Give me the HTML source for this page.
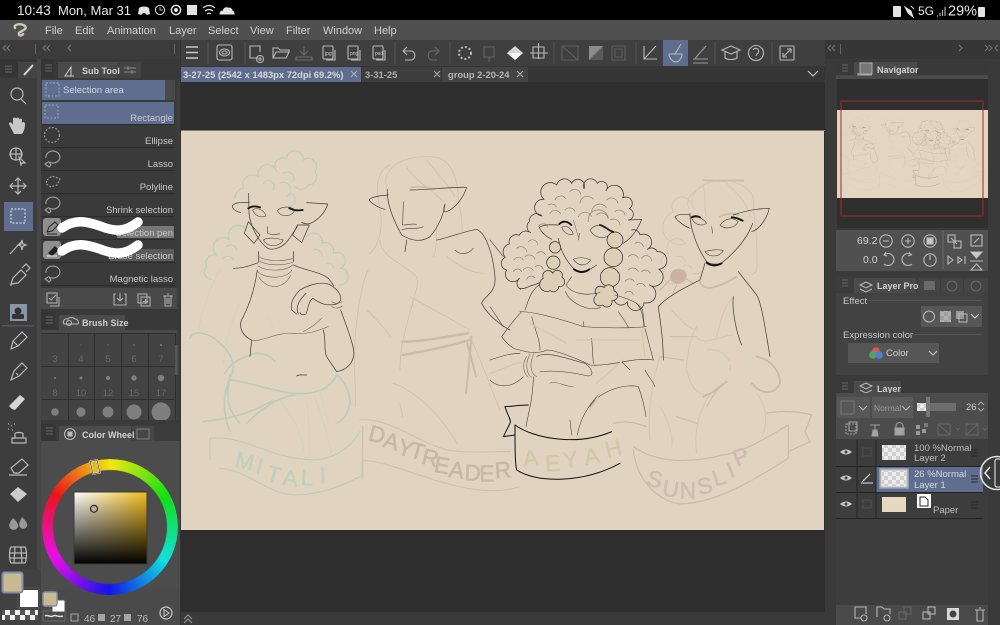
<!DOCTYPE html>
<html><head><meta charset="utf-8"><style>
html,body{margin:0;padding:0;background:#2e2e2e;width:1000px;height:625px;overflow:hidden}
svg{position:absolute;left:0;top:0;font-family:"Liberation Sans",sans-serif}
.t{fill:#c6c6c6;font-size:10px}
.m{fill:#cfcfcf;font-size:11px}
.b{font-weight:bold}
.i{fill:none;stroke:#b9b9b9;stroke-width:1.1}
.l{fill:none;stroke:#403b33;stroke-width:2.1;stroke-linecap:round;stroke-linejoin:round}
.n{fill:none;stroke:#403b33;stroke-width:1.7;stroke-linecap:round;stroke-linejoin:round}
.g{fill:none;stroke:#6a6458;stroke-width:1.7;stroke-linecap:round}
.k{fill:none;stroke:#111;stroke-width:5.5;stroke-linecap:round}
.w{stroke-width:1.6;stroke-linejoin:round}
#wheel{position:absolute;left:42px;top:459px;width:136px;height:136px;border-radius:50%;background:conic-gradient(from 301deg,#e8141c,#f0e810,#12e012,#10e0e0,#1414e8,#e810e8,#e8141c);-webkit-mask:radial-gradient(circle,transparent 56.5px,#000 57.5px);mask:radial-gradient(circle,transparent 56.5px,#000 57.5px)}
#sq{position:absolute;left:74px;top:492px;width:73px;height:72px;background:linear-gradient(to bottom,transparent,#000),linear-gradient(to right,#fff,#f2be1c)}
</style></head><body>
<svg width="1000" height="625" viewBox="0 0 1000 625">
<defs>
<pattern id="ck" width="8" height="8" patternUnits="userSpaceOnUse"><rect width="8" height="8" fill="#ececec"/><rect width="4" height="4" fill="#cfcfcf"/><rect x="4" y="4" width="4" height="4" fill="#cfcfcf"/></pattern>
<pattern id="ck2" width="10" height="10" patternUnits="userSpaceOnUse"><rect width="10" height="10" fill="#f0f0f0"/><rect width="5" height="5" fill="#555"/><rect x="5" y="5" width="5" height="5" fill="#555"/></pattern>
<g id="art">
 <!-- Figure 1 sketches -->
 <g transform="translate(180 130) scale(.3333)" fill="none" stroke-linecap="round">
  <g stroke="#bccdb7" stroke-width="3.2">
   <path d="M285 110a25 25 0 0 1 35-25a25 25 0 0 1 50 5a25 25 0 0 1 35 35a25 25 0 0 1-20 40a25 25 0 0 1-40 5M290 125a25 25 0 0 0-55 15a30 30 0 0 0-45 35a30 30 0 0 0-25 30M310 130a20 20 0 0 1 30 25M250 160a18 18 0 0 1 30 20M300 160a20 20 0 0 1 20 40M330 190a18 18 0 0 1-10 40"/>
   <path d="M200 300a26 26 0 0 0-50 30a28 28 0 0 0-40 45a26 26 0 0 0-30 35a22 22 0 0 0 15 38M140 350a18 18 0 0 1 30 10M130 385a18 18 0 0 1 30 5"/>
   <path d="M380 320a25 25 0 0 1 45 20a25 25 0 0 1 35 30a25 25 0 0 1 22 45a20 20 0 0 1-5 50M400 360a18 18 0 0 1 25 20M440 400a15 15 0 0 1 20 15"/>
   <path stroke-width="5" d="M30 625C40 600 85 605 120 640C150 665 168 700 155 735C135 770 120 830 150 905M135 730C150 700 185 680 230 670C255 670 275 680 285 695M150 750C200 755 290 785 340 790C400 795 450 780 470 735C490 750 510 780 510 820C505 850 490 870 470 880M150 735C140 790 135 830 180 880M200 880C250 830 300 800 345 795M70 875C110 870 200 860 280 810"/>
   <path stroke-width="3.5" d="M90 925C200 915 260 985 400 990C450 990 510 960 540 905M120 1015C200 1020 260 1090 340 1095C420 1095 480 1070 540 1040M90 925L90 990M548 890L546 1050"/>
  </g>
  <g stroke="#cfd3bc" stroke-width="2.2">
   <path d="M120 420C90 470 70 530 55 600M180 520C150 580 140 620 130 700M265 560L280 600M400 790C420 850 440 900 455 970M380 820C390 870 385 930 390 970M290 800C340 860 365 910 372 965M420 780L445 880"/>
  </g>
  <!-- Figure 2 sketches -->
  <g stroke="#d0c1ad" stroke-width="2.6">
   <path d="M622 178C600 120 660 70 770 82C815 92 835 150 835 210C840 250 850 270 845 310M630 105C590 120 585 170 600 240C610 290 600 340 570 372M680 110C700 150 760 180 790 215M740 90C770 130 810 170 825 200M600 330C600 380 670 400 710 440C720 480 690 510 700 530M770 280C770 320 770 360 760 380"/>
   <path d="M565 420C540 470 530 560 525 640C520 720 530 800 525 830M560 540C590 570 620 600 630 620M690 500C760 540 820 570 870 600M700 510C680 590 660 640 660 720M640 760C700 780 780 850 830 940M800 380C840 410 880 430 910 430M870 620C900 680 930 770 960 840M660 820L668 860"/>
   <path stroke-width="3.5" d="M540 870C620 860 700 930 800 960C860 970 930 965 990 965M550 990C650 1000 780 1070 900 1080C950 1085 990 1080 1020 1070M548 890L548 1040"/>
  </g>
  <g stroke="#c9bba8">
   <path stroke-width="7" d="M665 635C730 635 800 620 865 610M668 675C730 665 800 650 870 630"/>
   <path stroke-width="6" d="M875 620L858 790M862 640L888 740"/>
   <path stroke-width="5" d="M695 172C720 168 745 172 765 178"/>
  </g>
  <!-- Figure 1 lines -->
  <path class="l" d="M208 218C185 216 165 218 158 226C155 238 168 244 182 248M380 218L443 222C438 245 415 270 392 280C380 284 372 280 365 277M206 190L207 250C212 295 240 340 265 356C285 362 310 350 325 330L352 290"/>
  <path class="k" d="M205 235C215 228 228 228 240 232M328 235C340 240 350 243 368 240"/>
  <path class="n" d="M218 240C232 230 252 240 258 258C245 264 226 260 218 240ZM292 242C305 228 330 228 345 240C335 260 305 265 292 242ZM265 310C280 320 290 310 300 312M250 330C265 320 295 325 310 330C300 350 265 355 250 330ZM262 290L262 310"/>
  <path class="l" d="M205 275L193 310L222 340L240 315ZM352 285L338 315L365 338L388 285ZM160 415C190 415 215 405 235 398M340 405C370 420 420 425 445 445L462 468M232 420C225 470 210 520 190 560C170 590 190 620 215 630M215 630L210 680M430 600C440 640 430 660 440 680L470 725M350 738C360 732 370 736 380 735M482 540C500 590 520 640 522 670C520 700 500 720 470 725M236 365L236 395M340 365L340 395"/>
  <path class="l" d="M360 480C385 465 420 455 445 462C480 480 495 510 470 522C440 530 420 520 398 505C385 515 385 535 378 552C372 556 362 555 360 548M360 480C340 500 330 520 335 540L350 552M378 490C358 510 345 530 355 552"/>
  <path class="g" d="M235 380C260 395 310 395 340 385M236 392C260 408 310 408 340 396M234 408C260 425 315 425 338 405M234 425C255 448 320 448 336 420M236 440C260 480 310 480 332 436M215 630C240 640 290 605 340 610C385 615 420 600 445 590M370 605C390 595 410 580 425 565M455 515C465 522 475 522 487 515M455 530C465 537 478 535 487 528"/>
  <!-- Figure 2 lines -->
  <path class="l" d="M625 195C600 197 575 200 567 210C575 222 600 235 615 238M690 180C740 180 820 170 860 172C850 205 825 235 800 245C790 248 790 235 795 222M622 178C620 220 640 270 665 315C690 330 720 340 750 320C775 290 790 260 795 222M680 330L675 365M770 330C800 325 850 305 890 298C920 310 940 380 945 440C950 490 910 500 905 520C925 560 970 590 990 600"/>
  <path class="n" d="M670 215L668 285C680 285 695 280 710 283M665 300C690 290 715 300 730 290M825 360C835 372 860 378 880 355"/>
 </g>
 <!-- Figures 3 and 4 -->
 <g transform="translate(490 130) scale(.3333)" fill="none" stroke-linecap="round">
  <!-- Figure 4 sketch -->
  <g stroke="#d5c2b3" stroke-width="2.6">
   <path d="M610 235C590 190 640 150 700 150C760 155 800 190 790 230C795 280 805 350 800 420C790 440 770 440 750 420M640 170C610 180 580 210 600 240M640 165C650 210 640 240 650 260M700 150C730 180 770 210 780 260"/>
   <path d="M600 215a28 28 0 0 0-50 30a25 25 0 0 0 40 95M585 340a28 28 0 0 0-50 30a28 28 0 0 0-10 50a26 26 0 0 0 30 40M610 430a25 25 0 0 0 30-10M560 380a18 18 0 0 1 25 15M580 410a15 15 0 0 1 25 5"/>
   <path d="M620 590C600 620 590 680 590 720C605 790 640 800 660 790M620 620C640 650 680 620 730 615M650 660C700 650 730 700 720 720M510 680C490 740 470 850 480 930M545 540C580 580 590 590 620 600M620 970C610 900 630 800 700 760M800 790C830 830 835 880 815 920M730 500C700 530 690 580 680 620M510 830C540 880 550 930 545 950"/>
  </g>
  <g stroke="#cdb9a9">
   <path stroke-width="3.5" d="M430 950C500 1000 600 1000 700 975C780 960 850 910 895 885M430 960C440 1050 500 1110 570 1122C680 1120 790 1050 895 985M895 885L895 985M830 850C880 840 930 845 965 855L945 905L960 935L895 965M370 880C410 870 440 880 470 890"/>
   <path stroke-width="5.5" d="M640 150C680 155 720 150 760 152M630 455C640 490 690 470 740 440M800 680C850 690 870 730 870 760C850 800 810 790 785 760M690 260C710 250 730 250 745 255M640 800C670 790 690 770 710 755"/>
   <path stroke-width="3" d="M540 620L620 620M510 680L580 690M560 860L620 880M650 830C660 810 680 780 700 760"/>
  </g>
  <path stroke="#e8cfc0" stroke-width="8" d="M725 660L735 720M748 665L750 725M715 700L760 695"/>
  <path fill="#cbb2a2" stroke="#cbb2a2" stroke-width="3" d="M565 418c15 0 25 10 23 22c-2 14-15 22-28 20c-12-2-20-12-18-22c2-12 12-20 23-20zM540 450L510 480M560 465L545 500M585 445L610 460"/>
  <!-- Figure 3 body -->
  <path class="n" d="M105 540C115 510 125 475 155 460M90 545C140 545 220 570 280 590C340 595 420 595 470 590M385 545C395 560 410 580 415 592M440 520C455 535 460 560 462 590M95 545C70 570 50 600 35 620C50 640 70 660 90 660C120 670 150 670 170 660C200 660 270 690 300 705C370 710 430 680 490 690L465 595M125 560C135 600 150 630 150 660M0 690C30 680 60 670 90 670M0 750C20 770 60 780 100 740M140 680C170 660 240 690 285 700C305 715 315 735 295 738C260 730 200 720 150 725M130 740C130 800 115 850 108 890M395 695L420 720M465 720C475 740 490 755 495 770M300 830C330 780 410 760 445 770C460 810 465 840 468 860M305 625L310 700M280 575L282 590M0 330L40 380M0 530L40 590M240 870L245 915M262 915C270 870 290 830 330 790"/>
  <path class="g" d="M110 680C95 700 100 730 115 742M120 672C105 700 108 730 125 742M132 670C118 700 120 730 140 740M180 760C200 750 220 770 250 770"/>
  <path fill="none" stroke="#d0c9a8" stroke-width="3.5" d="M0 730C40 720 80 690 110 700M320 760L400 690M330 790L300 840M455 600L465 680M120 580L230 640M260 630L450 630"/>
  <path fill="none" stroke="#111" stroke-width="3" d="M75 885C75 950 75 1000 80 1020C140 1060 280 1060 390 1000M75 885C130 925 260 950 365 905M115 825C90 825 60 830 45 830C50 850 65 870 60 880L40 920L75 915"/>
  <!-- Figure 4 lines -->
  <path class="l" d="M600 255C575 250 558 255 555 262C565 275 585 290 600 295M730 255C770 240 815 235 838 235C830 270 805 300 785 305M600 250C600 300 625 360 650 395C665 405 690 405 700 395C730 370 770 330 788 280M645 400L630 450M745 425L800 495C815 520 825 590 840 680M630 450C590 470 530 500 505 530C510 570 520 620 520 690M730 500C725 540 740 610 755 645"/>
  <path class="k" d="M650 398C665 410 680 408 695 400M725 262C735 262 750 268 758 272M605 262C612 258 622 258 630 262"/>
  <path class="n" d="M605 265C620 255 640 265 650 280C635 290 615 285 605 265ZM690 285C705 265 730 260 745 275C735 295 705 300 690 285ZM645 365C665 358 690 358 700 362C690 380 660 385 645 365ZM665 290L668 310"/>
 </g>
 <!-- Figure 3 head and hair -->
 <g transform="translate(500 170) scale(.3333)" fill="none" stroke-linecap="round" stroke-linejoin="round">
  <path stroke="#332e28" stroke-width="2.1" d="M62 358A20 20 0 0 1 58 325A22 22 0 0 1 20 300A20 20 0 0 1 16 262A24 24 0 0 1 28 222A22 22 0 0 1 58 196A22 22 0 0 1 92 188A20 20 0 0 1 88 155A22 22 0 0 1 126 138A24 24 0 0 1 132 88A26 26 0 0 1 170 45A24 24 0 0 1 215 40A20 20 0 0 1 252 56A16 16 0 0 1 292 40A14 14 0 0 1 318 62A24 24 0 0 1 368 84A18 18 0 0 1 388 116A18 18 0 0 1 388 150"/>
  <path stroke="#332e28" stroke-width="2.1" d="M395 180A20 20 0 0 1 420 195A20 20 0 0 1 442 238A20 20 0 0 1 472 245A24 24 0 0 1 476 298A24 24 0 0 1 448 345A24 24 0 0 1 432 398A24 24 0 0 1 382 395A20 20 0 0 1 345 372M60 355C75 360 90 345 102 345C115 340 130 335 135 320"/>
  <g stroke="#7d766a" stroke-width="1.8">
   <path d="M50 235a18 18 0 0 1 30 10M85 215a16 16 0 0 1 28 8M42 270a16 16 0 0 1 28 0M75 260a18 18 0 0 1 30 8M110 250a16 16 0 0 1 26 4M40 305a14 14 0 0 1 25 0M70 300a18 18 0 0 1 30 2M105 290a16 16 0 0 1 25 8M80 330a14 14 0 0 1 25-6M115 170a16 16 0 0 1 28 0M150 130a18 18 0 0 1 32 2M165 90a18 18 0 0 1 32-4M210 65a18 18 0 0 1 32 8M145 105a16 16 0 0 1 24 6M240 100a22 22 0 0 1 40-12M275 125a24 24 0 0 1 44-12M320 90a20 20 0 0 1 34 10M345 125a18 18 0 0 1 30 10M235 140a22 22 0 0 1 40 0M290 135a20 20 0 0 1 34 10M265 155a24 24 0 0 1 60-10M330 150a20 20 0 0 1 30 15M195 120a18 18 0 0 1 30 4M220 150L235 200M405 220a16 16 0 0 1 25 10M385 260a18 18 0 0 1 30 5M425 265a16 16 0 0 1 30 8M385 300a18 18 0 0 1 30 5M425 305a16 16 0 0 1 26 5M375 335a16 16 0 0 1 28 0M410 345a16 16 0 0 1 26 5M375 370a14 14 0 0 1 25 4"/>
  </g>
  <g fill="#dbd0b7" stroke="#2e2a24" stroke-width="2.1">
   <circle cx="165" cy="232" r="17"/><circle cx="160" cy="278" r="20"/>
   <path d="M130 325a15 15 0 0 1 28-15a14 14 0 0 1 28 12a15 15 0 0 1-10 28a16 16 0 0 1-26 12a16 16 0 0 1-20-37z"/>
   <circle cx="345" cy="210" r="24"/><circle cx="340" cy="262" r="28"/><circle cx="330" cy="322" r="29"/>
   <path d="M290 375a14 14 0 0 1 22-22a16 16 0 0 1 30 10a14 14 0 0 1-6 28a16 16 0 0 1-28 14a16 16 0 0 1-18-30z"/>
  </g>
  <path class="l" d="M175 165C150 163 128 165 118 172C124 188 140 200 155 208M385 150L425 148C415 175 395 205 370 220M175 205C182 245 200 275 225 300C245 310 270 300 290 285"/>
  <path class="k" d="M178 162C190 150 205 155 214 165M300 165C318 170 325 182 340 186M222 298C240 310 255 308 268 298"/>
  <path class="n" d="M185 172C200 162 215 178 220 192C208 198 192 190 185 172ZM270 180C285 160 315 162 335 186C320 210 285 208 270 180ZM220 268C238 260 258 264 272 270C258 290 235 290 220 268ZM238 190L236 210"/>
  <path class="n" d="M215 320L198 345C215 372 260 378 300 368M196 365C215 405 270 425 302 412M345 375C380 385 415 395 428 420L433 468"/>
 </g>
</g>
</defs>

<!-- base -->
<rect width="1000" height="625" fill="#2e2e2e"/>
<rect width="1000" height="20" fill="#000"/>
<rect y="20" width="1000" height="20" fill="#505050"/>
<rect y="40" width="1000" height="26" fill="#3f3f3f"/>
<rect x="180" y="66" width="650" height="16" fill="#363636"/>

<!-- status bar -->
<text x="17" y="15" style="font-size:13.5px" fill="#e8e8e8">10:43</text>
<text x="58" y="15" style="font-size:13px" fill="#e8e8e8">Mon, Mar 31</text>
<g fill="#e4e4e4" stroke="#e4e4e4">
 <path d="M139 8c2-2 8-2 10 0l1 6-3 1-2-2h-2l-2 2-3-1z" stroke="none"/>
 <circle cx="160" cy="10" r="4.6" fill="none" stroke-width="1"/><path d="M160 7v3h3" fill="none" stroke-width=".8"/>
 <circle cx="176" cy="10" r="4.6" fill="none" stroke-width="1.5"/><circle cx="176" cy="10" r="1.5"/>
 <rect x="187" y="5" width="10" height="10" stroke="none"/>
 <path d="M203 8q6-5 12 0M205 11q4-3 8 0M207 14q2-1.500 4 0" fill="none" stroke-width="1.1"/>
 <path d="M220 14q0-3 3-3q1-4 5-3q4 0 4 3q2 0 2 3z"/>
 <rect x="893" y="6" width="8" height="11" rx="1" stroke="none"/>
 <path d="M905 7l6 4 2 6-5-4zM911 6l3 3" stroke-width="1"/>
 <path d="M937 16h1M940 16v-3M942.500 16v-6M945 16v-9" fill="none" stroke="#aaa" stroke-width="1.2"/>
 <rect x="978" y="7" width="7" height="10" rx="1" stroke="none"/>
</g>
<text x="918" y="15" style="font-size:12px" fill="#e8e8e8">5G</text>
<text x="948" y="15.500" style="font-size:14.500px" fill="#e8e8e8">29%</text>

<!-- menu -->
<path d="M15 28C13 24 21 23 25 26C28 30 20 31 19 33C18 36 22 36 23 34" fill="none" stroke="#cfc7b5" stroke-width="2.4" stroke-linecap="round"/>
<text x="45" y="34" class="m">File</text><text x="75" y="34" class="m">Edit</text><text x="107" y="34" class="m">Animation</text><text x="169" y="34" class="m">Layer</text><text x="208" y="34" class="m">Select</text><text x="250" y="34" class="m">View</text><text x="286" y="34" class="m">Filter</text><text x="323" y="34" class="m">Window</text><text x="374" y="34" class="m">Help</text>

<!-- top toolbar -->
<rect x="663" y="40" width="25" height="26" fill="#5f6d8e"/>
<g fill="none" stroke="#565656"><path d="M208 42v22M245 42v22M395 42v22M450 42v22M554 42v22M636 42v22M715 42v22M772 42v22"/></g>
<path d="M186 47h12M186 52.500h12M186 58h12" stroke="#c8c8c8" stroke-width="1.600"/>
<g class="i">
 <rect x="217" y="45" width="15" height="15" rx="2"/><ellipse cx="224.500" cy="52.500" rx="5" ry="3.500"/><ellipse cx="224.500" cy="52.500" rx="2.500" ry="1.500"/>
 <path d="M258 58h-8V46h10v6"/><circle cx="260" cy="59" r="3.500"/><path d="M258 59h4M260 57v4"/>
 <path d="M273 58V48h5l2 2h9v3M273 58l3-6h13l-3 6z"/>
 <path style="stroke:#6e6e6e" d="M296 57h16v3h-16zM304 46v9M300 51l4 4 4-4"/>
 <rect x="323" y="46" width="10" height="13" rx="1"/><path d="M326 60h9v-10"/>
 <rect x="348" y="46" width="10" height="13" rx="1"/><path d="M351 60h9v-10"/>
 <rect x="373" y="46" width="10" height="13" rx="1"/><path d="M376 60h9v-10"/>
 <path d="M404 51h8a5 5 0 0 1 0 9h-7M407 47l-4 4 4 4"/>
 <path style="stroke:#6a6a6a" d="M438 51h-7a5 5 0 0 0 0 9h6M435 47l4 4-4 4"/>
 <circle cx="465" cy="53" r="6" stroke-dasharray="2 2" style="stroke-width:2"/>
 <path style="stroke:#666" d="M484 47h10v10h-10zM489 57v5"/>
 <path d="M533 47h11v11h-11zM538.500 43v16M530 53h18"/>
 <path style="stroke:#5e5e5e" d="M562 46h16v14h-16zM562 46l16 14"/>
 <path style="stroke:#5e5e5e" d="M612 46h13v14h-13zM615 49h7v8h-7z"/>
 <path d="M644 46v13h13M644 59l12-13"/>
 <path d="M669 54h13c0 4-3 8-6 8c-3 0-7-4-7-8M675 54l6-10" />
 <path style="stroke:#9a9a9a" d="M693 59h15M695 59l3-4 8-9M693 63h15"/>
 <path d="M722 50l9-4 9 4-9 4zM725 52v6c3 2 9 2 12 0v-6"/>
 <circle cx="756" cy="53" r="7.500"/><path d="M753 50a3 3 0 1 1 4 4l-1 2M756 58v.5"/>
 <rect x="780" y="46" width="14" height="14" rx="1"/><path d="M783 57l8-8M783 53v4h4M787 49h4v4"/>
</g>
<path d="M507 53l8-7 8 7-8 7z" fill="#d5d5d5"/><path d="M507 53h16l-8 7z" fill="#f5f5f5"/>
<path d="M589 46h14v14h-14z" fill="#8b8b8b"/><path d="M589 60l14-14v14z" fill="#5a5a5a"/>
<text x="325" y="55" style="font-size:5px" fill="#cfcfcf">jpg</text><text x="350" y="55" style="font-size:5px" fill="#cfcfcf">png</text><text x="375" y="55" style="font-size:5px" fill="#cfcfcf">psd</text>

<!-- tabs -->
<rect x="181" y="67" width="180" height="15" fill="#5f6d8e"/>
<rect x="362" y="67" width="79" height="15" fill="#3e3e3e"/>
<rect x="442" y="67" width="86" height="15" fill="#444"/>
<text x="183" y="78" class="b" style="font-size:9.400px" fill="#d9d9d9">3-27-25 (2542 x 1483px 72dpi 69.2%)</text>
<text x="365" y="78" class="b" style="font-size:9.400px" fill="#aaa">3-31-25</text>
<text x="448" y="78" class="b" style="font-size:9.400px" fill="#b5b5b5">group 2-20-24</text>
<path d="M351 71l6 6M357 71l-6 6M434 71l6 6M440 71l-6 6M517 71l6 6M523 71l-6 6" stroke="#b0b0b0"/>
<path d="M808 71l5 5 5-5" fill="none" stroke="#c0c0c0" stroke-width="1.200"/>

<!-- canvas -->
<rect x="180" y="130" width="645" height="1" fill="#7d7d7d"/>
<rect x="181" y="131" width="643" height="399" fill="#e0d3bf"/>
<clipPath id="cc"><rect x="181" y="131" width="643" height="399"/></clipPath>
<g clip-path="url(#cc)"><use href="#art"/></g>
<g transform="translate(180 130) scale(.3333)" font-size="68">
 <text class="w" stroke="#bfd1bd" x="162 224 255 306 361 420" y="1010 1030 1050 1065 1065 1060" rotate="12 14 16 6 4 -2" fill="#bfd1bd">MITALI</text>
 <text class="w" stroke="#c6b7a6" x="562 606 648 686 722 760 804 852 898 946" y="930 950 970 980 1000 1025 1040 1050 1055 1045" rotate="14 16 18 16 14 10 8 4 0 -4" fill="#c6b7a6">DAYTREADER</text>
</g>
<g transform="translate(490 130) scale(.3333)" font-size="68">
 <text class="w" stroke="#d0c9a9" x="102 167 222 287 352" y="1010 1025 1015 1005 985" rotate="-6 -4 -8 -10 -14" fill="#d0c9a9">AEYAH</text>
 <text class="w" stroke="#cebcae" x="467 514 569 627 676 722 742" y="1065 1095 1105 1095 1070 1045 1010" rotate="14 10 0 -12 -18 -22 -24" fill="#cebcae">SUNSLIP</text>
</g>
<!-- bottom bar -->
<rect x="180" y="612" width="650" height="13" fill="#3a3a3a"/>
<path d="M184 619l4-4 4 4M184 623l4-4 4 4" fill="none" stroke="#999"/>

<!-- left column -->
<rect x="0" y="40" width="180" height="585" fill="#3d3d3d"/>
<rect x="37" y="40" width="4" height="585" fill="#474747"/>
<rect x="180" y="40" width="1" height="585" fill="#333"/>
<rect x="0" y="40" width="180" height="19" fill="#3b3b3b"/>
<rect x="35" y="44" width="1" height="10" fill="#666"/><rect x="174" y="44" width="1" height="10" fill="#666"/>
<path d="M6 45l-3 3 3 3M10 45l-3 3 3 3M46 45l-3 3 3 3M50 45l-3 3 3 3M71 45l-3 3 3 3" fill="none" stroke="#7d7d7d"/>
<rect x="0" y="59" width="37" height="19" fill="#353535"/>
<rect x="18" y="62" width="19" height="16" fill="#444"/>
<path d="M5 66h7M5 69h7M5 72h7" stroke="#666"/>
<path d="M24 75l9-10" stroke="#d8d8d8" stroke-width="2"/>

<!-- tool icons -->
<rect x="4" y="202" width="29" height="29" fill="#5f6d8e"/>
<rect x="10" y="304" width="17" height="17" fill="#8896a8"/>
<rect x="2" y="325" width="32" height="1.500" fill="#555"/>
<g class="i" style="stroke-width:1.2">
 <circle cx="17" cy="94" r="6"/><path d="M21 99l5 5"/>
 <path d="M12 130l-3-6c0-2 2-2 3-1l1 2v-6c0-2 3-2 3 0 0-2 3-2 3 0v1c0-2 3-2 3 0v3c1-2 3-1 3 1 0 4-1 7-3 10h-8z" fill="#c8c8c8" style="stroke:none"/>
 <circle cx="16" cy="154" r="6"/><path d="M10 154h12M16 148v12M12 149c-2 3-2 7 0 10M20 149c2 3 2 7 0 10M19 157l6 6-3 0-1 2z"/>
 <path d="M18 178v16M10 186h16M15 181l3-3 3 3M15 191l3 3 3-3M13 183l-3 3 3 3M23 183l3 3-3 3"/>
 <rect x="11" y="209" width="14" height="14" stroke-dasharray="2 1.500" style="stroke:#d5d8e0"/>
 <path d="M10 254l11-12M22 240l1 4 3 1-3 1-1 4-1-4-3-1 3-1z"/>
 <path d="M11 284l2-6 8-8 5 5-8 8zM22 268l4-4 4 4-4 4M11 284v2"/>
 <path d="M11 349l2-8 9-9 5 5-9 9zM13 341l5 5"/>
 <path d="M11 380l3-9 8-8 5 5-8 8zM16 373l2 2"/>
 <path d="M12 409l-3-3 11-11 5 4-10 11z" style="fill:#d5d5d5;stroke:none"/>
 <path d="M12 438h14v5h-14zM15 438v-4c0-2 8-2 8 0v4M8 424h1M11 426h1M14 424h1M8 429h1M12 430h1" />
 <path d="M11 468l11-9 6 6-9 8h-5zM9 475h18"/>
 <path d="M10 494l8-7 9 7-9 8z" style="fill:#ccc;stroke:none"/>
 <path d="M13 518c-3 4-5 7-3 10 2 3 7 2 8-1 1-3-2-6-5-9zM22 517c-2 4-4 7-2 10 2 3 6 2 7-1 1-3-2-6-5-9z" style="fill:#999;stroke:none"/>
 <path d="M11 547h14c2 3 2 13 0 16h-14c-2-3-2-13 0-16zM10 553h16M10 558h16M15 547l-1 16M21 547l1 16"/>
 <circle cx="18" cy="311" r="3.500" style="fill:#333;stroke:none"/><rect x="12" y="314" width="12" height="5" rx="1" style="fill:#333;stroke:none"/>
</g>

<!-- swatches -->
<rect x="0" y="570" width="41" height="55" fill="#414141"/>
<rect x="18" y="588" width="21" height="20" fill="#3c3c3c" stroke="#555"/>
<rect x="20" y="590" width="18" height="17" fill="#fff"/>
<rect x="2.500" y="572.500" width="20" height="20" rx="2" fill="#c9b98f" stroke="#7f8eb0" stroke-width="2"/>
<rect x="2" y="610" width="36" height="10" fill="url(#ck2)"/>

<!-- Sub Tool panel -->
<rect x="41" y="59" width="139" height="19" fill="#383838"/>
<rect x="41" y="59" width="13" height="19" fill="#353535"/>
<path d="M45 65h7M45 68h7M45 71h7" stroke="#666"/>
<rect x="58" y="62" width="60" height="16" fill="#4a4a4a"/>
<rect x="119" y="62" width="22" height="16" fill="#444"/>
<path d="M65 76l6-9v9zM66 76h8" fill="none" stroke="#ccc"/>
<text x="82" y="74" class="b" style="font-size:9px" fill="#cfcfcf">Sub Tool</text>
<path d="M124 68h12M124 72h12M128 66v4M132 70v4" stroke="#888"/>
<rect x="41" y="78" width="136" height="230" fill="#3a3a3a"/>
<rect x="165" y="80" width="10" height="20" fill="#4a4a4a"/>
<rect x="42" y="80" width="123" height="20" fill="#5f6d8e"/>
<rect x="42" y="102" width="132" height="22" fill="#5f6d8e"/>
<rect x="46" y="83" width="13" height="13" fill="none" stroke="#9aa5c0" stroke-dasharray="2 1.500"/>
<rect x="45" y="105" width="13" height="13" fill="none" stroke="#9aa5c0" stroke-dasharray="2 1.500"/>
<text x="63" y="93" style="font-size:9.500px" fill="#d5d8e0">Selection area</text>
<g text-anchor="end" style="font-size:9.500px" fill="#c9c9c9">
<text x="173" y="121">Rectangle</text><text x="173" y="144">Ellipse</text><text x="173" y="167">Lasso</text><text x="173" y="190">Polyline</text><text x="173" y="213">Shrink selection</text>
<rect x="117" y="226" width="57" height="12" fill="#777"/><rect x="110" y="249" width="64" height="12" fill="#5a5a5a"/>
<text x="173" y="236">Selection pen</text><text x="173" y="259">Erase selection</text><text x="173" y="282">Magnetic lasso</text>
</g>
<path d="M41 124.500h134M41 147.500h134M41 170.500h134M41 193.500h134M41 216.500h134M41 239.500h134M41 262.500h134M41 285.500h134" stroke="#2c2c2c"/>
<g class="i" style="stroke:#a0a0a0">
 <circle cx="52" cy="135" r="7.500" stroke-dasharray="2 1.500"/>
 <path d="M46 158a7 6 0 1 1 6 5l-3-1 2 3-2 2-4-3 3-2"/>
 <path d="M47 180l5-4 8 3-3 6-6 2-5-3z" stroke-dasharray="2 1.500"/>
 <path d="M46 204a7 6 0 1 1 6 5l-3-1 2 3-2 2-4-3 3-2"/>
 <path d="M46 273a7 6 0 1 1 6 5l-3-1 2 3-2 2-4-3 3-2"/>
</g>
<rect x="43" y="218" width="18" height="18" rx="3" fill="#8f8f8f"/>
<rect x="43" y="241" width="18" height="18" rx="3" fill="#8f8f8f"/>
<path d="M47 232l2-5 6-5 3 3-6 6zM47 234h10" fill="none" stroke="#222"/>
<path d="M48 253l7-7 4 4-7 6z" fill="#222"/><path d="M47 256h10" stroke="#eee"/>
<path d="M62 228C75 219 85 221 100 226C115 232 125 232 138 222" fill="none" stroke="#fff" stroke-width="9.500" stroke-linecap="round"/>
<path d="M62 251C75 242 85 244 100 249C115 255 125 255 138 245" fill="none" stroke="#fff" stroke-width="9.500" stroke-linecap="round"/>
<rect x="41" y="288" width="136" height="21" fill="#494949"/>
<g class="i" style="stroke:#adadad">
 <rect x="47" y="293" width="10" height="10"/><path d="M50 306h9v-9M49 298l2 2 5-5"/>
 <path d="M116 294h-2v11h12v-11h-2M120 293v8M117 298l3 3 3-3"/>
 <rect x="138" y="294" width="9" height="9"/><rect x="141" y="297" width="9" height="9"/><path d="M145.500 299v5M143 301.500h5"/>
 <path d="M163 296h10M165 296v10h6v-10M167 294h2M167 298v6M169 298v6"/>
</g>

<!-- Brush Size -->
<rect x="41" y="309" width="139" height="24" fill="#393939"/>
<rect x="41" y="312" width="15" height="17" fill="#353535"/>
<path d="M46 317h7M46 320h7M46 323h7" stroke="#666"/>
<rect x="59" y="315" width="66" height="15" fill="#4a4a4a"/>
<rect x="41" y="330" width="136" height="3" fill="#4a4a4a"/>
<path d="M64 324c-2-3 1-6 4-5 1-2 5-2 7 0 3 0 4 3 3 5z" fill="none" stroke="#bbb"/><circle cx="69" cy="323" r="2.500" fill="none" stroke="#bbb"/>
<text x="82" y="326" class="b" style="font-size:9px" fill="#cfcfcf">Brush Size</text>
<rect x="41" y="333" width="136" height="87" fill="#434343"/>
<path d="M41 333.500h134M41 366.500h134M41 399.500h134M68.500 333v87M94.500 333v87M121.500 333v87M148.500 333v87M175.500 333v87" stroke="#2f2f2f"/>
<g text-anchor="middle" style="font-size:9.500px" fill="#6a6a6a">
<text x="55" y="362">3</text><text x="81" y="362">4</text><text x="108" y="362">5</text><text x="134" y="362">6</text><text x="161" y="362">7</text>
<text x="55" y="396">8</text><text x="81" y="396">10</text><text x="108" y="396">12</text><text x="134" y="396">15</text><text x="161" y="396">17</text>
</g>
<g fill="#7f7f7f">
<circle cx="81" cy="345" r=".5"/><circle cx="108" cy="345" r=".6"/><circle cx="134" cy="345" r=".8"/><circle cx="161" cy="345" r="1"/>
<circle cx="55" cy="378" r="1"/><circle cx="81" cy="378" r="1.400"/><circle cx="108" cy="378" r="2"/><circle cx="134" cy="378" r="2.700"/><circle cx="161" cy="378" r="3.200"/>
<circle cx="55" cy="412" r="3.800"/><circle cx="81" cy="412" r="4.600"/><circle cx="108" cy="412" r="5.500"/><circle cx="134" cy="412" r="7.500"/><circle cx="161" cy="412" r="9.500"/>
</g>
<rect x="175" y="345" width="3" height="30" fill="#555"/>

<!-- Color wheel panel -->
<rect x="41" y="420" width="139" height="5" fill="#3a3a3a"/>
<rect x="41" y="424" width="139" height="186" fill="#4c4c4c"/>
<rect x="41" y="424" width="139" height="17" fill="#3c3c3c"/>
<rect x="41" y="424" width="15" height="17" fill="#353535"/>
<path d="M46 428h7M46 431h7M46 434h7" stroke="#666"/>
<rect x="59" y="426" width="72" height="15" fill="#4c4c4c"/>
<rect x="132" y="426" width="22" height="15" fill="#464646"/>
<circle cx="70" cy="434" r="5.500" fill="none" stroke="#bbb"/><rect x="67.500" y="431.500" width="5" height="5" fill="#bbb"/>
<text x="82" y="438" class="b" style="font-size:9px" fill="#d0d0d0">Color Wheel</text>
<rect x="137" y="429" width="12" height="10" fill="none" stroke="#808080"/>
<rect x="41" y="590" width="139" height="35" fill="#4a4a4a"/>
<rect x="43" y="611" width="22" height="10" fill="none" stroke="#666"/>
<path d="M45 616c3-2 5 2 8 0s5 2 10 0" stroke="#ddd" fill="none" stroke-width="1.500"/>
<rect x="52" y="600" width="13" height="12" fill="#fff" stroke="#555"/>
<rect x="43" y="592" width="14" height="14" rx="2" fill="#c9b98f" stroke="#7f8eb0" stroke-width="1.500"/>
<rect x="71" y="614" width="7" height="7" fill="none" stroke="#a5a5a5"/><rect x="98" y="614" width="7" height="7" fill="#a5a5a5"/><rect x="124" y="614" width="7" height="7" fill="#a5a5a5"/>
<g style="font-size:10px" fill="#bcbcbc"><text x="84" y="622">46</text><text x="110" y="622">27</text><text x="137" y="622">76</text></g>
<circle cx="166" cy="613" r="6" fill="none" stroke="#c8c8c8" stroke-width="1.200"/><path d="M164 609.500l5 3.500-5 3.500z" fill="none" stroke="#c8c8c8"/>

<!-- Right panels -->
<rect x="825" y="40" width="175" height="585" fill="#3a3a3a"/>
<rect x="825" y="40" width="175" height="19" fill="#363636"/>
<path d="M831 45l-3 3 3 3M835 45l-3 3 3 3M959 45l3 3-3 3M985 45l3 3-3 3M989 45l3 3-3 3M998 45l-3 3 3 3" fill="none" stroke="#777"/>
<rect x="840" y="44" width="1" height="10" fill="#666"/>
<rect x="836" y="60" width="152" height="18" fill="#393939"/>
<rect x="854" y="62" width="63" height="14" fill="#4a4a4a"/>
<rect x="836" y="75" width="152" height="4" fill="#4a4a4a"/>
<path d="M842 65h6M842 68h6M842 71h6" stroke="#666"/>
<path d="M860 63h12v11h-12zM858 73v2h14" fill="#777" stroke="#aaa"/>
<text x="877" y="73" class="b" style="font-size:9px" fill="#d0d0d0">Navigator</text>
<rect x="837" y="79" width="151" height="149" fill="#2f2f2f"/>
<rect x="837" y="110" width="151" height="88" fill="#e2d5c1"/>
<svg x="0" y="0" width="1000" height="625"><g transform="translate(837 110) scale(.2346 .2206) translate(-181 -131)" opacity=".55"><use href="#art"/></g></svg>
<rect x="841" y="101" width="142" height="115" fill="none" stroke="#a5282e" stroke-width="1"/>
<rect x="836" y="230" width="152" height="41" fill="#505050"/>
<path d="M943 231v38" stroke="#6a6a6a"/>
<g style="font-size:10.500px" fill="#d0d0d0"><text x="857" y="244">69.2</text><text x="863" y="263">0.0</text></g>
<g class="i">
 <circle cx="886" cy="241" r="6.200"/><path d="M883 241h6"/>
 <circle cx="908" cy="241" r="6.200"/><path d="M905 241h6M908 238v6"/>
 <circle cx="930" cy="241" r="6.200"/><rect x="927" y="238" width="6" height="6" style="fill:#c8c8c8"/>
 <path d="M884 255a6 6 0 1 1 0 9M886 252l-2 3 3 1"/>
 <path d="M912 255a6 6 0 1 0 0 9M909 252l2 3-3 1"/>
 <circle cx="930" cy="260" r="6.200"/><path d="M930 255v5"/>
 <rect x="948" y="235" width="7" height="7"/><rect x="954" y="241" width="7" height="7"/><path d="M951 238l6 6"/>
 <rect x="971" y="235" width="11" height="11"/><path d="M974 243l5-5"/>
 <path d="M948 256l5 4-5 4zM965 256v8M962 260l-4-3v6z"/>
 <path d="M971 252h11l-5.500 6zM971 270h11l-5.500-6zM970 261h13"/>
</g>
<path d="M971 252h11l-5.500 6z" fill="#c8c8c8"/>

<!-- Layer property -->
<rect x="836" y="276" width="152" height="17" fill="#3c3c3c"/>
<rect x="854" y="278" width="62" height="15" fill="#4a4a4a"/>
<path d="M842 280h6M842 283h6M842 286h6" stroke="#666"/>
<path d="M860 285l6-3 6 3-6 3zM860 289l6 3 6-3" fill="none" stroke="#bbb"/>
<text x="877" y="289" class="b" style="font-size:9px" fill="#d0d0d0">Layer Pro</text>
<rect x="918" y="278" width="22" height="15" fill="#444"/><rect x="941" y="278" width="22" height="15" fill="#444"/><rect x="964" y="278" width="24" height="15" fill="#444"/>
<rect x="924" y="281" width="11" height="9" fill="#6a6a6a"/><circle cx="952" cy="286" r="5" fill="none" stroke="#6a6a6a"/><circle cx="976" cy="286" r="5" fill="none" stroke="#6a6a6a"/>
<rect x="836" y="293" width="152" height="82" fill="#424242"/>
<text x="843" y="304" style="font-size:9.500px" fill="#c8c8c8">Effect</text>
<path d="M868 300.500h114" stroke="#555"/>
<rect x="921" y="306" width="61" height="21" fill="#575757"/>
<circle cx="929" cy="316.500" r="5.500" fill="none" stroke="#bcbcbc"/>
<rect x="940" y="311" width="11" height="11" fill="url(#ck)" opacity=".6"/>
<rect x="956" y="311" width="8" height="8" fill="#999"/><rect x="959" y="314" width="8" height="8" fill="none" stroke="#bbb"/>
<path d="M971 314l4 4 4-4" fill="none" stroke="#ddd"/>
<text x="843" y="338" style="font-size:9.500px" fill="#c8c8c8">Expression color</text>
<path d="M911 334.500h71" stroke="#555"/>
<rect x="848" y="343" width="91" height="20" fill="#565656"/>
<circle cx="876" cy="351" r="3.800" fill="#e0584c"/><circle cx="873" cy="355" r="3.800" fill="#4ca858"/><circle cx="879" cy="355" r="3.800" fill="#4f7fd8"/>
<text x="886" y="356" style="font-size:9.500px" fill="#d0d0d0">Color</text>
<path d="M929 351l4 4 4-4" fill="none" stroke="#ccc"/>

<!-- Layer panel -->
<rect x="836" y="379" width="152" height="14" fill="#3a3a3a"/>
<rect x="854" y="381" width="47" height="13" fill="#4a4a4a"/>
<path d="M842 383h6M842 386h6M842 389h6" stroke="#666"/>
<path d="M860 386l6-3 6 3-6 3zM860 390l6 3 6-3" fill="none" stroke="#bbb"/>
<text x="877" y="392" class="b" style="font-size:9px" fill="#d0d0d0">Layer</text>
<rect x="836" y="393" width="152" height="46" fill="#4c4c4c"/>
<rect x="837" y="397" width="33" height="21" fill="#575757"/>
<rect x="841" y="401" width="13" height="13" fill="none" stroke="#777"/>
<path d="M859 406l4 4 4-4" fill="none" stroke="#b8b8b8"/>
<rect x="872" y="397" width="41" height="21" fill="#5a5a5a"/>
<text x="874" y="411" style="font-size:8.500px" fill="#9a9a9a">Normal</text>
<path d="M902 406l4 4 4-4" fill="none" stroke="#b8b8b8"/>
<rect x="917" y="403" width="9" height="8" fill="url(#ck)"/>
<rect x="926" y="403" width="30" height="8" fill="#6e6e6e"/>
<rect x="926" y="397" width="4" height="20" fill="#777"/>
<text x="966" y="410" style="font-size:9.500px" fill="#cfcfcf">26</text>
<path d="M978 405l3-3 3 3M978 408l3 3 3-3" fill="none" stroke="#aaa"/>
<g class="i" style="stroke:#9c9c9c">
 <rect x="846" y="424" width="10" height="10" stroke-dasharray="2 1"/><rect x="849" y="422" width="8" height="9"/>
 <path d="M870 425h10M875 425v5M873 430h4l1 6h-6z" style="fill:#a5a5a5"/>
 <rect x="895" y="428" width="9" height="7" style="fill:#a5a5a5"/><path d="M896 428v-2a3.500 3.500 0 0 1 7 0v2"/>
</g>
<rect x="916" y="425" width="4" height="4" fill="#999"/><rect x="922" y="429" width="4" height="4" fill="#999"/><rect x="916" y="431" width="4" height="4" fill="#999"/><rect x="924" y="423" width="4" height="4" fill="#777"/>
<path d="M938 424h12v11h-12zM938 424l12 11M956 428l2 2 2-2M966 424h12v11h-12zM966 435l12-11M983 428l2 2 2-2" fill="none" stroke="#666"/>
<rect x="836" y="439" width="152" height="166" fill="#3d3d3d"/>
<rect x="876" y="466" width="107" height="26" fill="#5f6d8e"/>
<path d="M836 466.500h147M836 492.500h147M836 518.500h147M857 440v78M876 440v78" stroke="#232323"/>
<g fill="#c8c8c8">
<path d="M840 452q6-5 12 0q-6 5-12 0z"/><path d="M840 478q6-5 12 0q-6 5-12 0z"/><path d="M840 504q6-5 12 0q-6 5-12 0z"/>
</g>
<g fill="#444"><circle cx="846" cy="452" r="1.500"/><circle cx="846" cy="478" r="1.500"/><circle cx="846" cy="504" r="1.500"/></g>
<rect x="863" y="448" width="8" height="8" fill="none" stroke="#505050"/><rect x="863" y="500" width="8" height="8" fill="none" stroke="#505050"/>
<path d="M861 483h12M862 482l8-8" stroke="#ddd" fill="none"/>
<rect x="882" y="445" width="24" height="15" fill="url(#ck)"/>
<rect x="880" y="469" width="28" height="19" fill="#d8d0c8" stroke="#9aa4c0" stroke-width="1.500"/>
<rect x="882" y="471" width="24" height="15" fill="url(#ck)"/>
<rect x="882" y="497" width="24" height="15" fill="#e7d8c0"/>
<g style="font-size:9.500px">
<text x="914" y="451" fill="#bdbdbd">100 %Normal</text><text x="914" y="461" fill="#bdbdbd">Layer 2</text>
<text x="914" y="477" fill="#d5d8e0">26 %Normal</text><text x="914" y="488" fill="#d5d8e0">Layer 1</text>
<text x="933" y="513" fill="#bdbdbd">Paper</text>
</g>
<rect x="917" y="494" width="14" height="14" fill="#fff"/>
<path d="M920 497h5l3 3v6h-8z" fill="#fff" stroke="#222"/>
<path d="M971 450h7M971 453h7M971 456h7M971 476h7M971 479h7M971 482h7M971 502h7M971 505h7M971 508h7" stroke="#2c2c2c"/>
<rect x="836" y="605" width="152" height="20" fill="#4a4a4a"/>
<g class="i" style="stroke:#b5b5b5">
 <path d="M861 618h-6v-11h11v7"/><circle cx="864" cy="618" r="3"/>
 <path d="M877 617v-10h5l2 2h6v5"/><circle cx="887" cy="618" r="3"/>
 <rect x="923" y="612" width="7" height="7"/><rect x="928" y="607" width="7" height="7"/>
 <path d="M975 610h10M977 610v11h6v-11M979 608h2"/>
</g>
<path d="M899 612h7v7h-7zM904 607h7v7h-7z" fill="none" stroke="#666"/>
<rect x="947" y="608" width="12" height="12" fill="#d8d8d8"/><circle cx="953" cy="614" r="3.500" fill="#444"/>
<circle cx="997" cy="473" r="16.500" fill="none" stroke="#e2e2e2" stroke-width="1.500"/>
<rect x="995" y="459" width="8" height="28" rx="2" fill="#3a3a3a" stroke="#d5d5d5" stroke-width="1.200"/>
<path d="M990 467l-5 6 5 6" fill="none" stroke="#e6e6e6" stroke-width="1.500"/>
</svg>
<div id="wheel"></div>
<div id="sq"></div>
<svg width="1000" height="625" style="pointer-events:none">
<rect x="74" y="492" width="73" height="72" fill="none" stroke="#3a3a3a"/>
<rect x="91.500" y="460.500" width="7" height="13" fill="#e8b820" stroke="#fff" stroke-width="1.500" transform="rotate(-13 95 467)"/>
<rect x="91.500" y="460.500" width="7" height="13" fill="none" stroke="#222" stroke-width=".6" transform="rotate(-13 95 467)"/>
<circle cx="94" cy="508.700" r="3.500" fill="#b8ac90" stroke="#111"/>
</svg>
</body></html>
